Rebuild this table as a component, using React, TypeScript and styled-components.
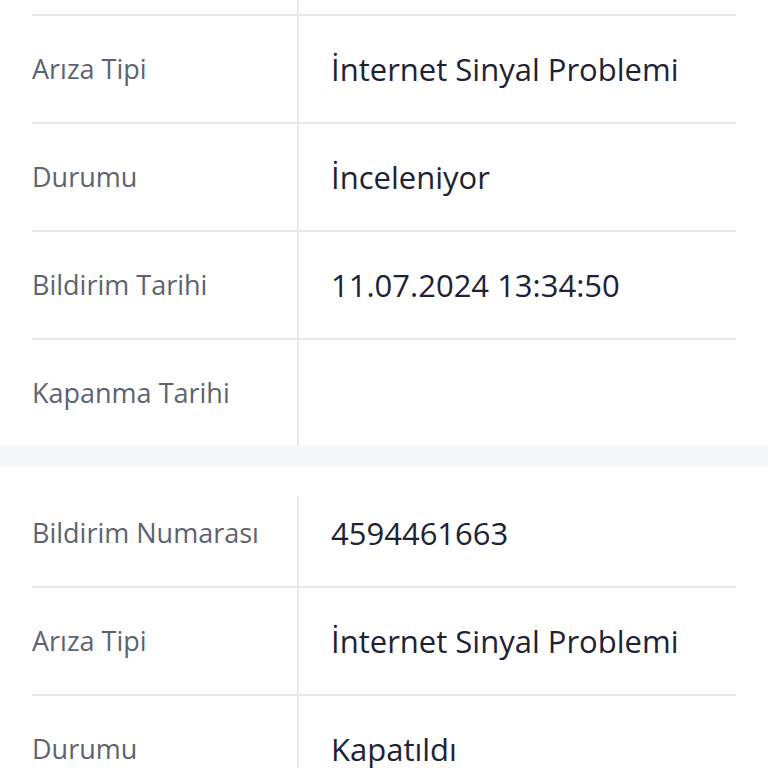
import React from "react";
import styled, { createGlobalStyle } from "styled-components";

const Global = createGlobalStyle`
  html, body { margin: 0; padding: 0; background: #ffffff; }
  body { font-family: "Open Sans", Lato, sans-serif; overflow: hidden; }
`;

const Page = styled.div`
  display: flex;
  flex-direction: column;
  background: #f6f7f9;
  gap: 20px;
  margin-top: -92px;
`;

const Card = styled.section<{ $padTop?: number }>`
  background: #ffffff;
  padding: ${(p) => p.$padTop ?? 0}px 32px 0 32px;
`;

const Row = styled.div<{ $last?: boolean; $padTop?: number }>`
  display: grid;
  grid-template-columns: 265px 1fr;
  border-bottom: ${(p) => (p.$last ? "none" : "2px solid #e8e9ec")};
  & > div {
    padding-top: ${(p) => p.$padTop ?? 40}px;
  }
`;

const Label = styled.div`
  padding: 40px 0;
  font-size: 27px;
  line-height: 26px;
  color: #5e6370;
  white-space: nowrap;
`;

const Value = styled.div`
  padding: 40px 0 40px 32px;
  border-left: 2px solid #e8e9ec;
  font-size: 31px;
  line-height: 26px;
  color: #1e2234;
  min-height: 26px;
  white-space: nowrap;
`;

type Item = { label: string; value: string };

const first: Item[] = [
  { label: "Bildirim Numarası", value: "4594461664" },
  { label: "Arıza Tipi", value: "İnternet Sinyal Problemi" },
  { label: "Durumu", value: "İnceleniyor" },
  { label: "Bildirim Tarihi", value: "11.07.2024 13:34:50" },
  { label: "Kapanma Tarihi", value: "" },
];

const second: Item[] = [
  { label: "Bildirim Numarası", value: "4594461663" },
  { label: "Arıza Tipi", value: "İnternet Sinyal Problemi" },
  { label: "Durumu", value: "Kapatıldı" },
  { label: "Bildirim Tarihi", value: "10.07.2024 09:12:41" },
];

export default function App() {
  return (
    <>
      <Global />
      <Page>
        <Card>
          {first.map((it, i) => (
            <Row key={i} $last={i === first.length - 1}>
              <Label>{it.label}</Label>
              <Value>{it.value}</Value>
            </Row>
          ))}
        </Card>
        <Card $padTop={30}>
          {second.map((it, i) => (
            <Row key={i} $padTop={i === 0 ? 24 : 40}>
              <Label>{it.label}</Label>
              <Value>{it.value}</Value>
            </Row>
          ))}
        </Card>
      </Page>
    </>
  );
}
